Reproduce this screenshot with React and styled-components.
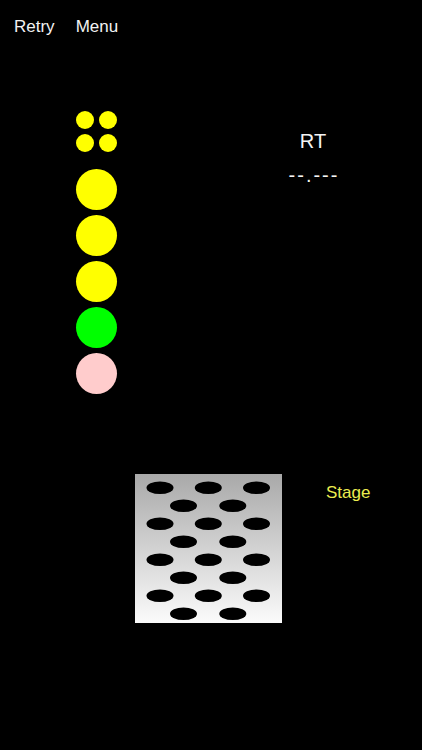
import React from 'react'
import styled, { createGlobalStyle } from 'styled-components'

const GlobalStyle = createGlobalStyle`
    html, body {
        margin: 0;
        padding: 0;
        background: #000;
    }
    body {
        font-family: "Liberation Sans", Arial, sans-serif;
    }
`

const Screen = styled.div`
    width: 422px;
    height: 750px;
    background-color: #000;
    overflow: hidden;
    display: flex;
    flex-direction: column;
`

const TopBar = styled.div`
    display: flex;
    gap: 21px;
    padding: 17px 0 0 14px;
`

const NavButton = styled.button`
    background: none;
    border: none;
    padding: 0;
    color: #f2f2f2;
    font-family: inherit;
    font-size: 17px;
    line-height: 20px;
    cursor: pointer;
`

const Main = styled.div`
    display: flex;
    align-items: flex-start;
    padding-left: 76px;
    margin-top: 74px;
`

const Lights = styled.div`
    display: flex;
    flex-direction: column;
    width: 41px;
    gap: 5px;
`

const DotGrid = styled.div`
    display: grid;
    grid-template-columns: 18px 18px;
    gap: 5px;
    margin-bottom: 12px;
`

const Dot = styled.div`
    width: 18px;
    height: 18px;
    border-radius: 50%;
    background: #ffff00;
`

const Lamp = styled.div`
    width: 41px;
    height: 41px;
    border-radius: 50%;
    background: ${p => p.$color};
`

const Readout = styled.div`
    width: 100px;
    margin-left: 146px;
    padding-top: 18px;
    display: flex;
    flex-direction: column;
    align-items: center;
    color: #f4f4f4;
    font-size: 20px;
    line-height: 24px;
`

const Time = styled.div`
    margin-top: 10px;
    letter-spacing: 2px;
    padding-left: 2px;
`

const StageRow = styled.div`
    display: flex;
    align-items: flex-start;
    padding-left: 135px;
    margin-top: 80px;
`

const StageBox = styled.svg`
    display: block;
    width: 147px;
    height: 149px;
`

const StageLabel = styled.div`
    margin: 9px 0 0 44px;
    color: #ecec50;
    font-size: 17px;
    line-height: 20px;
`

const lamps = ['#ffff00', '#ffff00', '#ffff00', '#00ff00', '#ffcccc']

const holes = []
for (let r = 0; r < 8; r++) {
    const y = 13.7 + r * 18
    const xs = r % 2 === 0 ? [25, 73.3, 121.5] : [48.5, 97.8]
    xs.forEach(x => holes.push({ x, y }))
}

function App() {
    return (
        <>
            <GlobalStyle />
            <Screen>
                <TopBar>
                    <NavButton>Retry</NavButton>
                    <NavButton>Menu</NavButton>
                </TopBar>

                <Main>
                    <Lights>
                        <DotGrid>
                            <Dot /><Dot /><Dot /><Dot />
                        </DotGrid>
                        {lamps.map((c, i) => <Lamp key={i} $color={c} />)}
                    </Lights>
                    <Readout>
                        <div>RT</div>
                        <Time>--.---</Time>
                    </Readout>
                </Main>

                <StageRow>
                    <StageBox viewBox="0 0 147 149">
                        <defs>
                            <linearGradient id="plate" x1="0" y1="0" x2="0" y2="1">
                                <stop offset="0" stopColor="#a9a9a9" />
                                <stop offset="1" stopColor="#fbfbfb" />
                            </linearGradient>
                            <filter id="soft" x="-20%" y="-40%" width="140%" height="180%">
                                <feGaussianBlur stdDeviation="0.6" />
                            </filter>
                        </defs>
                        <rect width="147" height="149" fill="url(#plate)" />
                        {holes.map((h, i) => (
                            <ellipse key={i} cx={h.x} cy={h.y} rx="13.5" ry="6.3" fill="#000" filter="url(#soft)" />
                        ))}
                    </StageBox>
                    <StageLabel>Stage</StageLabel>
                </StageRow>
            </Screen>
        </>
    )
}

export default App
